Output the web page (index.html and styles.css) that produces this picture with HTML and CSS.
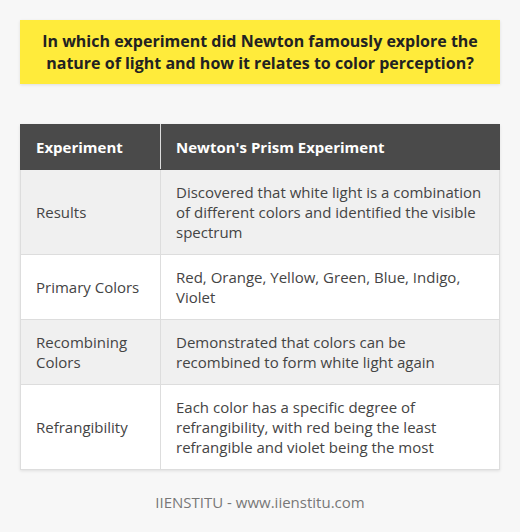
FILE: index.html
```html
<!DOCTYPE html>
<html>
<head>
<meta charset="utf-8">
<link rel="stylesheet" href="styles.css">
</head>
<body>
<div class="page">
  <div class="question">In which experiment did Newton famously explore the nature of light and how it relates to color perception?</div>
  <table class="info">
    <thead>
      <tr><th class="c1">Experiment</th><th>Newton's Prism Experiment</th></tr>
    </thead>
    <tbody>
      <tr><td class="c1">Results</td><td>Discovered that white light is a combination of different colors and identified the visible spectrum</td></tr>
      <tr><td class="c1">Primary Colors</td><td>Red, Orange, Yellow, Green, Blue, Indigo, Violet</td></tr>
      <tr><td class="c1">Recombining Colors</td><td>Demonstrated that colors can be recombined to form white light again</td></tr>
      <tr><td class="c1">Refrangibility</td><td>Each color has a specific degree of refrangibility, with red being the least refrangible and violet being the most</td></tr>
    </tbody>
  </table>
  <div class="footer">IIENSTITU - www.iienstitu.com</div>
</div>
</body>
</html>
```

FILE: styles.css
```css
html, body {
  margin: 0;
  padding: 0;
  background: #f7f7f7;
}
.page {
  width: 520px;
  height: 532px;
  box-sizing: border-box;
  padding: 20px 20px 0 20px;
  font-family: "Open Sans", "Liberation Sans", sans-serif;
}
.question {
  background: #ffeb3b;
  color: #222;
  font-weight: 700;
  font-size: 16px;
  line-height: 22px;
  text-align: center;
  padding: 10px 10px;
  height: 64px;
  box-sizing: border-box;
  box-shadow: 0 1px 3px rgba(0,0,0,0.1);
}
.info {
  margin-top: 40px;
  width: 480px;
  border-collapse: collapse;
  font-size: 15px;
  line-height: 20px;
  color: #444;
  box-shadow: 0 1px 3px rgba(0,0,0,0.1);
}
.info th, .info td {
  border: 1px solid #ddd;
  padding: 12px 15px;
  text-align: left;
  vertical-align: middle;
}
.info th {
  background: #4a4a4a;
  color: #fff;
  font-weight: 700;
  border-color: #4a4a4a;
  border-right-color: #ddd;
}
.info th:last-child {
  border-right-color: #4a4a4a;
}
.info .c1 {
  width: 109px;
}
.info tbody tr:nth-child(odd) td {
  background: #f0f0f0;
}
.info tbody tr:nth-child(even) td {
  background: #fff;
}
.footer {
  text-align: center;
  color: #777;
  font-size: 15px;
  margin-top: 22px;
}
```
